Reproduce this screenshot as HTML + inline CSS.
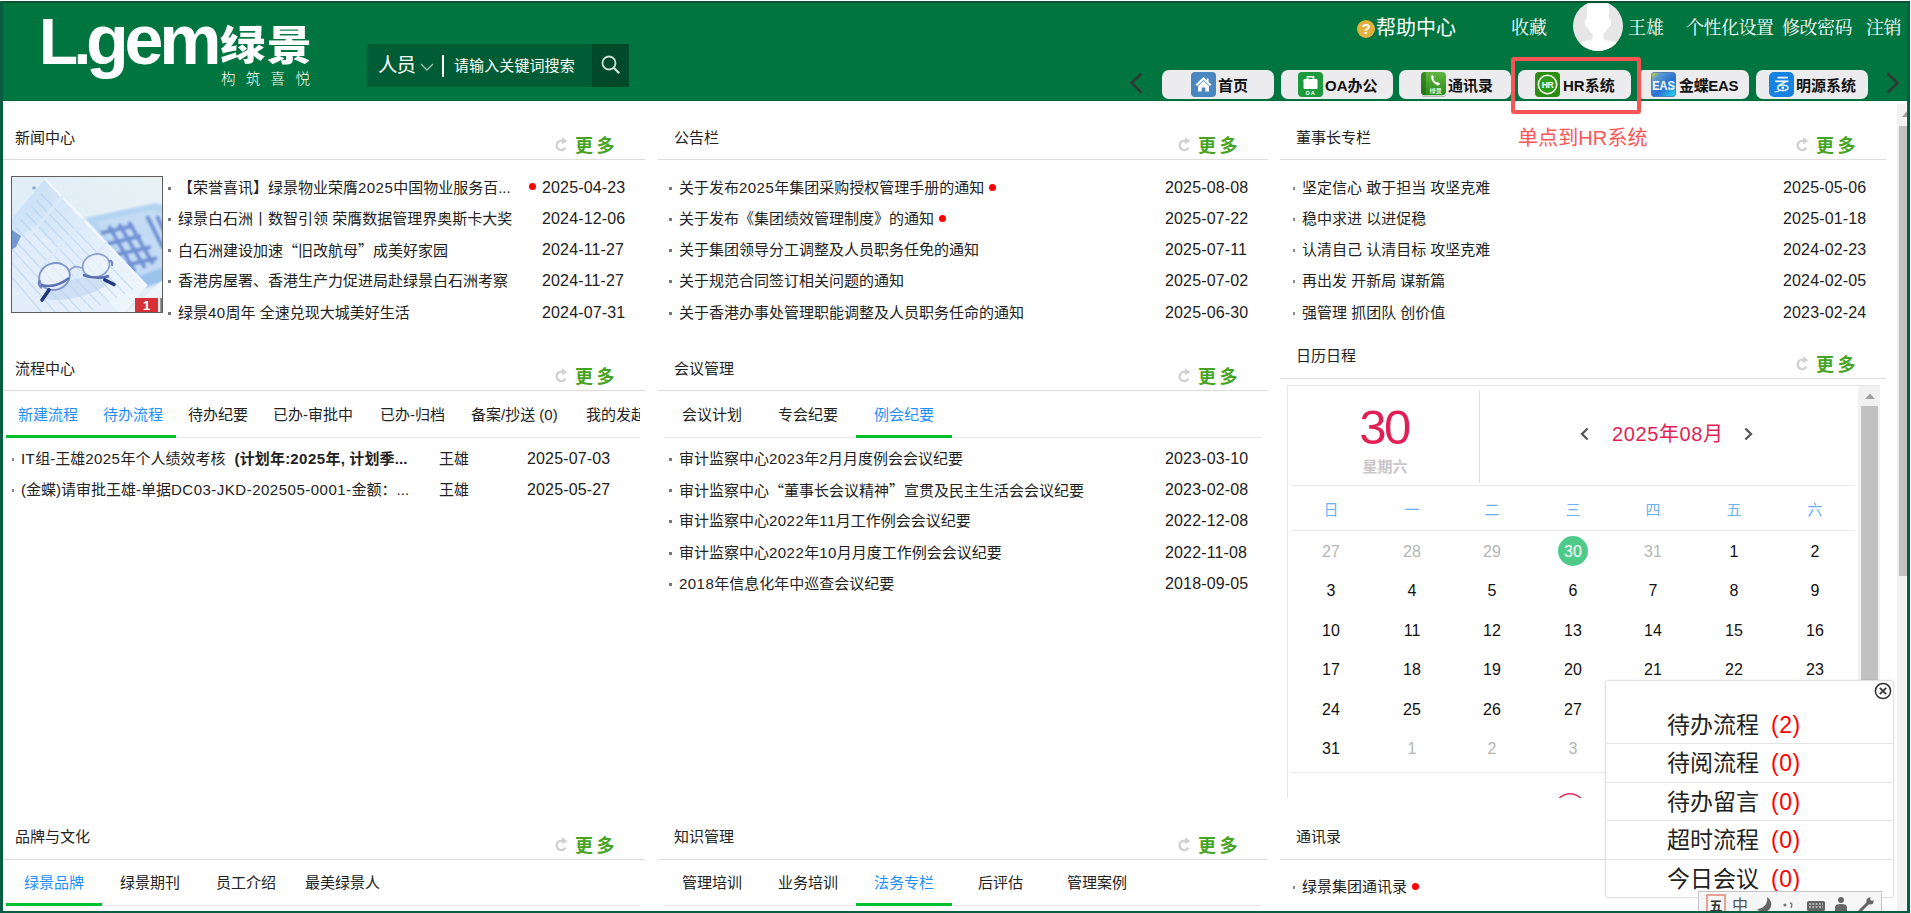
<!DOCTYPE html>
<html lang="zh-CN">
<head>
<meta charset="utf-8">
<title>绿景 OA 门户</title>
<style>
*{box-sizing:border-box;margin:0;padding:0}
html,body{width:1911px;height:913px;overflow:hidden;background:#fff}
body{position:relative;font-family:"Liberation Sans","Noto Sans CJK SC",sans-serif;font-size:15px;color:#222;line-height:1}
.abs{position:absolute}
.serif{font-family:"Liberation Serif","Noto Serif CJK SC",serif}
/* frame */
#hdr{left:0;top:1px;width:1910px;height:100px;background:#007540;border-bottom:1px solid #006a38}
#topdark{left:1px;top:1px;width:1909px;height:2px;background:#06512f}
#bl{left:0;top:2px;width:3px;height:911px;background:#075e40;z-index:60}
#br{left:1907px;top:2px;width:3px;height:911px;background:#075e40;z-index:60}
#bb{left:0;top:911px;width:1910px;height:2px;background:#075e40;z-index:60}
/* header */
.ut{color:#fff;font-size:18px;font-weight:400;top:18px;white-space:nowrap;line-height:20px}
.nav{top:70px;width:112px;height:29px;background:#ececef;border-radius:7px;font-weight:700;font-size:15px;color:#111;white-space:nowrap}
.nav svg{position:absolute;left:29px;top:2px;width:25px;height:25px}
.nav span{position:absolute;left:56px;top:8px;line-height:16px}
/* panels */
.pt{font-size:15px;color:#222;white-space:nowrap;line-height:16px}
.hl{height:2px;background:#e4e4e4}
.more{font-size:18px;font-weight:700;color:#46a422;letter-spacing:3.5px;white-space:nowrap;line-height:18px}
.rf{width:13px;height:15px}
.li{white-space:nowrap;line-height:18px;font-size:15px;color:#222}
.li i{position:absolute;left:-10px;top:8px;width:3px;height:3px;background:#777}
.li i.s{width:2px;height:3px;background:#8a8a8a;left:-9px}
.li b.dot{display:inline-block;width:7px;height:7px;border-radius:50%;background:#f00;margin-left:5px;vertical-align:2px}
.dt{white-space:nowrap;line-height:18px;font-size:16px;color:#222;letter-spacing:.15px}
u{text-decoration:none;letter-spacing:.45px}
q{quotes:none;font-family:'Noto Sans CJK SC',sans-serif}q:before,q:after{content:none}
.tab{white-space:nowrap;line-height:18px;font-size:15px;color:#222}
.tab.on{color:#1e8fff}
.ul{height:3px;background:#00c030}
.tl{height:1px;background:#e6e6e6}
</style>
</head>
<body>
<div class="abs" id="hdr"></div>
<div class="abs" id="topdark"></div>

<!-- logo -->
<div class="abs" style="left:39px;top:0px;font-size:64px;font-weight:700;color:#fff;letter-spacing:-4.5px;line-height:80px;white-space:nowrap">L.<span style="font-size:70px;letter-spacing:-4.2px;margin-left:-1px">gem</span></div>
<div class="abs" style="left:220px;top:14px;font-size:41px;font-weight:900;color:#fff;line-height:56px;white-space:nowrap;letter-spacing:1.5px;transform:scale(1.1,1);transform-origin:0 0;font-family:'Noto Sans CJK SC',sans-serif">绿景</div>
<div class="abs" style="left:221px;top:71px;font-size:14.5px;font-weight:300;color:#fff;line-height:16px;white-space:nowrap;letter-spacing:10.3px">构筑喜悦</div>

<!-- search -->
<div class="abs" style="left:367px;top:44px;width:262px;height:43px;background:#005c34"></div>
<div class="abs" style="left:592px;top:44px;width:37px;height:43px;background:#004a2a"></div>
<div class="abs" style="left:378px;top:54px;font-size:19.500px;color:#fff;line-height:22px;white-space:nowrap;letter-spacing:-1px">人员</div>
<svg class="abs" style="left:420px;top:62px" width="14" height="10" viewBox="0 0 14 10"><path d="M1 2 L7 8 L13 2" fill="none" stroke="#9fc4b0" stroke-width="1.3"/></svg>
<div class="abs" style="left:442px;top:55px;width:2px;height:22px;background:#fff"></div>
<div class="abs" style="left:454px;top:57px;font-size:15px;color:#fff;line-height:18px;white-space:nowrap;letter-spacing:.1px">请输入关键词搜索</div>
<svg class="abs" style="left:599px;top:53px" width="24" height="24" viewBox="0 0 24 24"><circle cx="10" cy="10" r="6.500" fill="none" stroke="#cfe0d6" stroke-width="1.8"/><path d="M15 15 L19.600 19.600" stroke="#cfe0d6" stroke-width="2.2" stroke-linecap="round"/></svg>

<!-- user bar -->
<div class="abs" style="left:1357px;top:20px;width:18px;height:18px;border-radius:50%;background:#e5b13d;color:#fff;font-size:15px;font-weight:700;text-align:center;line-height:18px">?</div>
<div class="abs ut" style="left:1376px;top:17px;font-size:20px;font-weight:400;line-height:22px">帮助中心</div>
<div class="abs ut serif" style="left:1511px">收藏</div>
<svg class="abs" style="left:1573px;top:.8px" width="50" height="50" viewBox="0 0 50 50"><defs><clipPath id="av"><circle cx="25" cy="25" r="25"/></clipPath><clipPath id="av2"><rect x="0" y="2.200" width="50" height="49"/></clipPath></defs><g clip-path="url(#av2)"><circle cx="25" cy="25" r="25" fill="#e6e6e6"/><g clip-path="url(#av)" fill="#fff"><path d="M14 0 H36 V17.500 q2.600 .6 2.200 4.600 q-.4 3.800 -3.600 5.200 q-1.800 4.600 -4.400 6 V37.200 q0 1.600 3 2.100 q8 1 13 3.700 V50 H3.800 V43 q5 -2.700 13 -3.700 q3 -.5 3 -2.100 V33.300 q-2.600 -1.400 -4.400 -6 q-3.200 -1.400 -3.600 -5.200 q-.4 -4 2.200 -4.600 Z"/></g></g></svg>
<div class="abs ut serif" style="left:1628px">王雄</div>
<div class="abs ut serif" style="left:1686px;letter-spacing:-.5px">个性化设置</div>
<div class="abs ut serif" style="left:1782px;letter-spacing:-.5px">修改密码</div>
<div class="abs ut serif" style="left:1866px;letter-spacing:-.5px">注销</div>

<!-- nav arrows -->
<svg class="abs" style="left:1128px;top:71px" width="16" height="24" viewBox="0 0 16 24"><path d="M13.5 2.5 L3.5 12 L13.5 21.5" fill="none" stroke="#303834" stroke-width="2.6"/></svg>
<svg class="abs" style="left:1885px;top:71px" width="16" height="24" viewBox="0 0 16 24"><path d="M2.5 2.5 L12.5 12 L2.5 21.5" fill="none" stroke="#303834" stroke-width="2.6"/></svg>


<div class="abs nav" style="left:1162px"><svg viewBox="0 0 25 25"><rect width="25" height="25" rx="4" fill="#4a86c0"/><path d="M12.5 5 L4.5 12.6 L6 14 L12.5 8 L19 14 L20.5 12.6 L17.6 9.9 V6.5 H15.8 V8.2 Z" fill="#fff"/><path d="M7 14 L12.5 9 L18 14 V19.5 H14.3 V15.5 H10.7 V19.5 H7 Z" fill="#fff"/></svg><span>首页</span></div>
<div class="abs nav" style="left:1281px"><svg viewBox="0 0 25 25" style="left:17px"><rect width="25" height="25" rx="4" fill="#1d9a3e"/><rect x="5.5" y="7" width="14" height="10" rx="1.3" fill="#fff"/><path d="M9.5 7 V4.8 H15.5 V7" fill="none" stroke="#fff" stroke-width="1.6"/><text x="12.5" y="22.6" font-family="Liberation Sans,sans-serif" font-size="5.5" font-weight="700" fill="#fff" text-anchor="middle" letter-spacing="1">OA</text></svg><span style="left:44px">OA办公</span></div>
<div class="abs nav" style="left:1399px"><svg viewBox="0 0 25 25" style="left:22px"><defs><linearGradient id="pg" x1="0" y1="0" x2="0" y2="1"><stop offset="0" stop-color="#62b641"/><stop offset="1" stop-color="#2b8919"/></linearGradient></defs><rect x=".6" y="3" width="24.400" height="22" rx="3.5" fill="#a9a9a9"/><rect x=".6" y="2.200" width="24.400" height="22" rx="3.5" fill="#f2f2f2"/><rect x="0" y="0" width="25" height="23.300" rx="4" fill="url(#pg)"/><path d="M0 4 a4 4 0 0 1 4 -4 h.8 v23.300 h-.8 a4 4 0 0 1 -4 -4 z" fill="#1c6510" opacity=".55"/><path d="M11.400 2.800 q-1.700 .5 -1.400 2.500 q.8 4.800 5.600 7.800 q1.800 .9 3 -.5 l.5 -.9 l-2.600 -2 l-1.100 .9 q-2.300 -1.300 -3.200 -4.100 l1.100 -1.100 z" fill="#fff"/><text x="14.800" y="20.800" font-family="Noto Sans CJK SC,sans-serif" font-size="6.200" font-weight="700" fill="#d9f1cf" text-anchor="middle">绿景</text></svg><span style="left:49px">通讯录</span></div>
<div class="abs nav" style="left:1518px;width:113px"><svg viewBox="0 0 25 25" style="left:17px"><rect width="25" height="25" rx="4" fill="#2e8c12"/><circle cx="12.5" cy="12.5" r="9.2" fill="#2e9c1a" stroke="#fff" stroke-width="1.5"/><text x="12.5" y="15.6" font-family="Liberation Sans,sans-serif" font-size="8.5" font-weight="700" fill="#fff" text-anchor="middle" letter-spacing="-.4">HR</text></svg><span style="left:45px">HR系统</span></div>
<div class="abs nav" style="left:1637px"><svg viewBox="0 0 25 25" style="left:14px"><defs><linearGradient id="eg" x1="0" y1="0" x2=".9" y2="1"><stop offset="0" stop-color="#e6de20"/><stop offset=".22" stop-color="#5a9ad0"/><stop offset=".6" stop-color="#2a6fd2"/><stop offset="1" stop-color="#22d0ee"/></linearGradient></defs><rect x=".4" y=".4" width="24.200" height="24.200" rx="3" fill="url(#eg)" stroke="#3566a8" stroke-width=".8"/><text x="1.200" y="17.600" font-family="Liberation Sans,sans-serif" font-size="13.500" fill="#fff" textLength="22.600" lengthAdjust="spacingAndGlyphs">EAS</text></svg><span style="left:42px;letter-spacing:-.35px">金蝶EAS</span></div>
<div class="abs nav" style="left:1756px"><svg viewBox="0 0 25 25" style="left:13px"><rect width="25" height="25" rx="5" fill="#1683e2"/><path d="M8.600 5.600 H18.800" stroke="#fff" stroke-width="1.700" fill="none"/><path d="M6.200 9.300 H19.400" stroke="#fff" stroke-width="1.700" fill="none"/><path d="M16.600 9.600 L9.600 13.600" stroke="#fff" stroke-width="1.500" fill="none"/><ellipse cx="13.800" cy="15.800" rx="5.200" ry="2.700" fill="none" stroke="#fff" stroke-width="1.400"/><circle cx="13.800" cy="15.800" r="1.300" fill="#fff"/><path d="M5.400 20 q3.600 -.3 6.200 -1.700" stroke="#fff" stroke-width="1" fill="none"/></svg><span style="left:40px">明源系统</span></div>

<!-- annotation -->
<div class="abs" style="left:1511px;top:56.5px;width:130px;height:57px;border:4px solid #f75555;border-radius:3px;z-index:20"></div>
<div class="abs" style="left:1518px;top:126px;font-size:20px;color:#f55;letter-spacing:.1px;line-height:24px;white-space:nowrap;z-index:20">单点到HR系统</div>


<!--P0-->
<div class="abs pt" style="left:15px;top:130px">新闻中心</div>
<svg class="abs" style="left:555px;top:136px" width="13" height="16" viewBox="0 0 13 16"><path d="M8.3 5.3 A4.6 4.6 0 1 0 10.3 11.6" fill="none" stroke="#d0d0d0" stroke-width="2.4"/><path d="M7.2 1.2 L12.4 5.2 L6.8 8.2 Z" fill="#d0d0d0"/></svg>
<div class="abs more" style="left:575px;top:137px">更多</div>
<div class="abs" style="left:3px;top:159px;width:642px;height:1px;background:#dcdcdc"></div>
<div class="abs pt" style="left:674px;top:130px">公告栏</div>
<svg class="abs" style="left:1178px;top:136px" width="13" height="16" viewBox="0 0 13 16"><path d="M8.3 5.3 A4.6 4.6 0 1 0 10.3 11.6" fill="none" stroke="#d0d0d0" stroke-width="2.4"/><path d="M7.2 1.2 L12.4 5.2 L6.8 8.2 Z" fill="#d0d0d0"/></svg>
<div class="abs more" style="left:1198px;top:137px">更多</div>
<div class="abs" style="left:658px;top:159px;width:610px;height:1px;background:#dcdcdc"></div>
<div class="abs pt" style="left:1296px;top:130px">董事长专栏</div>
<svg class="abs" style="left:1796px;top:136px" width="13" height="16" viewBox="0 0 13 16"><path d="M8.3 5.3 A4.6 4.6 0 1 0 10.3 11.6" fill="none" stroke="#d0d0d0" stroke-width="2.4"/><path d="M7.2 1.2 L12.4 5.2 L6.8 8.2 Z" fill="#d0d0d0"/></svg>
<div class="abs more" style="left:1816px;top:137px">更多</div>
<div class="abs" style="left:1280px;top:159px;width:606px;height:1px;background:#dcdcdc"></div>
<div class="abs li" style="left:178px;top:179px"><i></i>【荣誉喜讯】绿景物业荣膺<u>2025</u>中国物业服务百...</div>
<div class="abs" style="left:529px;top:183px;width:7px;height:7px;border-radius:50%;background:#f00"></div>
<div class="abs dt" style="left:542px;top:179px">2025-04-23</div>
<div class="abs li" style="left:178px;top:210px"><i></i>绿景白石洲丨数智引领 荣膺数据管理界奥斯卡大奖</div>
<div class="abs dt" style="left:542px;top:210px">2024-12-06</div>
<div class="abs li" style="left:178px;top:241px"><i></i>白石洲建设加速<q>“</q>旧改航母<q>”</q>成美好家园</div>
<div class="abs dt" style="left:542px;top:241px">2024-11-27</div>
<div class="abs li" style="left:178px;top:272px"><i></i>香港房屋署、香港生产力促进局赴绿景白石洲考察</div>
<div class="abs dt" style="left:542px;top:272px">2024-11-27</div>
<div class="abs li" style="left:178px;top:304px"><i></i>绿景<u>40</u>周年 全速兑现大城美好生活</div>
<div class="abs dt" style="left:542px;top:304px">2024-07-31</div>
<div class="abs li" style="left:679px;top:179px"><i></i>关于发布<u>2025</u>年集团采购授权管理手册的通知<b class="dot"></b></div>
<div class="abs dt" style="left:1165px;top:179px">2025-08-08</div>
<div class="abs li" style="left:679px;top:210px"><i></i>关于发布《集团绩效管理制度》的通知<b class="dot"></b></div>
<div class="abs dt" style="left:1165px;top:210px">2025-07-22</div>
<div class="abs li" style="left:679px;top:241px"><i></i>关于集团领导分工调整及人员职务任免的通知</div>
<div class="abs dt" style="left:1165px;top:241px">2025-07-11</div>
<div class="abs li" style="left:679px;top:272px"><i></i>关于规范合同签订相关问题的通知</div>
<div class="abs dt" style="left:1165px;top:272px">2025-07-02</div>
<div class="abs li" style="left:679px;top:304px"><i></i>关于香港办事处管理职能调整及人员职务任命的通知</div>
<div class="abs dt" style="left:1165px;top:304px">2025-06-30</div>
<div class="abs li" style="left:1302px;top:179px"><i class="s"></i>坚定信心 敢于担当 攻坚克难</div>
<div class="abs dt" style="left:1783px;top:179px">2025-05-06</div>
<div class="abs li" style="left:1302px;top:210px"><i class="s"></i>稳中求进 以进促稳</div>
<div class="abs dt" style="left:1783px;top:210px">2025-01-18</div>
<div class="abs li" style="left:1302px;top:241px"><i class="s"></i>认清自己 认清目标 攻坚克难</div>
<div class="abs dt" style="left:1783px;top:241px">2024-02-23</div>
<div class="abs li" style="left:1302px;top:272px"><i class="s"></i>再出发 开新局 谋新篇</div>
<div class="abs dt" style="left:1783px;top:272px">2024-02-05</div>
<div class="abs li" style="left:1302px;top:304px"><i class="s"></i>强管理 抓团队 创价值</div>
<div class="abs dt" style="left:1783px;top:304px">2023-02-24</div>
<div class="abs pt" style="left:15px;top:361px">流程中心</div>
<svg class="abs" style="left:555px;top:367px" width="13" height="16" viewBox="0 0 13 16"><path d="M8.3 5.3 A4.6 4.6 0 1 0 10.3 11.6" fill="none" stroke="#d0d0d0" stroke-width="2.4"/><path d="M7.2 1.2 L12.4 5.2 L6.8 8.2 Z" fill="#d0d0d0"/></svg>
<div class="abs more" style="left:575px;top:368px">更多</div>
<div class="abs" style="left:3px;top:390px;width:642px;height:1px;background:#dcdcdc"></div>
<div class="abs pt" style="left:674px;top:361px">会议管理</div>
<svg class="abs" style="left:1178px;top:367px" width="13" height="16" viewBox="0 0 13 16"><path d="M8.3 5.3 A4.6 4.6 0 1 0 10.3 11.6" fill="none" stroke="#d0d0d0" stroke-width="2.4"/><path d="M7.2 1.2 L12.4 5.2 L6.8 8.2 Z" fill="#d0d0d0"/></svg>
<div class="abs more" style="left:1198px;top:368px">更多</div>
<div class="abs" style="left:658px;top:390px;width:610px;height:1px;background:#dcdcdc"></div>
<div class="abs pt" style="left:1296px;top:348px">日历日程</div>
<svg class="abs" style="left:1796px;top:355px" width="13" height="16" viewBox="0 0 13 16"><path d="M8.3 5.3 A4.6 4.6 0 1 0 10.3 11.6" fill="none" stroke="#d0d0d0" stroke-width="2.4"/><path d="M7.2 1.2 L12.4 5.2 L6.8 8.2 Z" fill="#d0d0d0"/></svg>
<div class="abs more" style="left:1816px;top:356px">更多</div>
<div class="abs" style="left:1280px;top:378px;width:606px;height:1px;background:#dcdcdc"></div>
<div class="abs" style="left:3px;top:395px;width:637px;height:50px;overflow:hidden">
<div class="abs tab" style="left:583px;top:11px">我的发起</div></div>
<div class="abs tl" style="left:6px;top:437px;width:634px"></div>
<div class="abs tab on" style="left:18px;top:406px">新建流程</div>
<div class="abs tab on" style="left:103px;top:406px">待办流程</div>
<div class="abs tab" style="left:188px;top:406px">待办纪要</div>
<div class="abs tab" style="left:273px;top:406px">已办-审批中</div>
<div class="abs tab" style="left:380px;top:406px">已办-归档</div>
<div class="abs tab" style="left:471px;top:406px">备案/抄送 (0)</div>
<div class="abs ul" style="left:6px;top:435px;width:170px"></div>
<div class="abs li" style="left:21px;top:450px"><i class="s"></i><u>IT</u>组-王雄<u>2025</u>年个人绩效考核 <b style="font-weight:700;margin-left:5px;letter-spacing:.15px">(计划年:<u>2025</u>年, 计划季...</b></div>
<div class="abs li" style="left:21px;top:481px"><i class="s"></i>(金蝶)请审批王雄-单据<u style="letter-spacing:.5px">DC03-JKD-202505-0001-</u>金额：...</div>
<div class="abs li" style="left:439px;top:450px">王雄</div>
<div class="abs dt" style="left:527px;top:450px">2025-07-03</div>
<div class="abs li" style="left:439px;top:481px">王雄</div>
<div class="abs dt" style="left:527px;top:481px">2025-05-27</div>
<div class="abs tl" style="left:664px;top:437px;width:598px"></div>
<div class="abs tab" style="left:682px;top:406px">会议计划</div>
<div class="abs tab" style="left:778px;top:406px">专会纪要</div>
<div class="abs tab on" style="left:874px;top:406px">例会纪要</div>
<div class="abs ul" style="left:856px;top:435px;width:96px"></div>
<div class="abs li" style="left:679px;top:450px"><i></i>审计监察中心<u>2023</u>年<u>2</u>月月度例会会议纪要</div>
<div class="abs dt" style="left:1165px;top:450px">2023-03-10</div>
<div class="abs li" style="left:679px;top:481px"><i></i>审计监察中心<q>“</q>董事长会议精神<q>”</q>宣贯及民主生活会会议纪要</div>
<div class="abs dt" style="left:1165px;top:481px">2023-02-08</div>
<div class="abs li" style="left:679px;top:512px"><i></i>审计监察中心<u>2022</u>年<u>11</u>月工作例会会议纪要</div>
<div class="abs dt" style="left:1165px;top:512px">2022-12-08</div>
<div class="abs li" style="left:679px;top:544px"><i></i>审计监察中心<u>2022</u>年<u>10</u>月月度工作例会会议纪要</div>
<div class="abs dt" style="left:1165px;top:544px">2022-11-08</div>
<div class="abs li" style="left:679px;top:575px"><i></i><u>2018</u>年信息化年中巡查会议纪要</div>
<div class="abs dt" style="left:1165px;top:575px">2018-09-05</div>
<div class="abs pt" style="left:15px;top:829px">品牌与文化</div>
<svg class="abs" style="left:555px;top:836px" width="13" height="16" viewBox="0 0 13 16"><path d="M8.3 5.3 A4.6 4.6 0 1 0 10.3 11.6" fill="none" stroke="#d0d0d0" stroke-width="2.4"/><path d="M7.2 1.2 L12.4 5.2 L6.8 8.2 Z" fill="#d0d0d0"/></svg>
<div class="abs more" style="left:575px;top:837px">更多</div>
<div class="abs" style="left:3px;top:859px;width:642px;height:1px;background:#dcdcdc"></div>
<div class="abs pt" style="left:674px;top:829px">知识管理</div>
<svg class="abs" style="left:1178px;top:836px" width="13" height="16" viewBox="0 0 13 16"><path d="M8.3 5.3 A4.6 4.6 0 1 0 10.3 11.6" fill="none" stroke="#d0d0d0" stroke-width="2.4"/><path d="M7.2 1.2 L12.4 5.2 L6.8 8.2 Z" fill="#d0d0d0"/></svg>
<div class="abs more" style="left:1198px;top:837px">更多</div>
<div class="abs" style="left:658px;top:859px;width:610px;height:1px;background:#dcdcdc"></div>
<div class="abs pt" style="left:1296px;top:829px">通讯录</div>
<div class="abs" style="left:1280px;top:859px;width:606px;height:1px;background:#dcdcdc"></div>
<div class="abs tl" style="left:6px;top:905px;width:634px"></div>
<div class="abs tab on" style="left:24px;top:874px">绿景品牌</div>
<div class="abs tab" style="left:120px;top:874px">绿景期刊</div>
<div class="abs tab" style="left:216px;top:874px">员工介绍</div>
<div class="abs tab" style="left:305px;top:874px">最美绿景人</div>
<div class="abs ul" style="left:6px;top:903px;width:96px"></div>
<div class="abs tl" style="left:664px;top:905px;width:598px"></div>
<div class="abs tab" style="left:682px;top:874px">管理培训</div>
<div class="abs tab" style="left:778px;top:874px">业务培训</div>
<div class="abs tab on" style="left:874px;top:874px">法务专栏</div>
<div class="abs tab" style="left:978px;top:874px">后评估</div>
<div class="abs tab" style="left:1067px;top:874px">管理案例</div>
<div class="abs ul" style="left:856px;top:903px;width:96px"></div>
<div class="abs li" style="left:1302px;top:878px"><i class="s"></i>绿景集团通讯录<b class="dot"></b></div>
<!--P1-->
<!--C0-->
<svg class="abs" style="left:11px;top:176px" width="152" height="137" viewBox="0 0 152 137">
<defs><linearGradient id="nbg" x1="0" y1="1" x2="1" y2="0"><stop offset="0" stop-color="#d4e8f8"/><stop offset=".55" stop-color="#e2eff7"/><stop offset="1" stop-color="#e9f1f3"/></linearGradient>
<linearGradient id="npap" x1="0" y1="0" x2="1" y2="1"><stop offset="0" stop-color="#c2dcf4"/><stop offset=".45" stop-color="#dfedfa"/><stop offset="1" stop-color="#f2f8fd"/></linearGradient>
<filter id="b1" x="-10%" y="-10%" width="120%" height="120%"><feGaussianBlur stdDeviation=".9"/></filter>
<filter id="b2" x="-10%" y="-10%" width="120%" height="120%"><feGaussianBlur stdDeviation=".7"/></filter>
<filter id="b3" x="-10%" y="-10%" width="120%" height="120%"><feGaussianBlur stdDeviation=".35"/></filter>
<clipPath id="ncl"><rect x="1" y="1" width="150" height="135"/></clipPath></defs>
<rect x="0" y="0" width="152" height="137" fill="url(#nbg)"/>
<g clip-path="url(#ncl)">
<g filter="url(#b1)">
<path d="M74 42 L145 27 L156 30 V100 L134 110 Z" fill="#b2d4f1"/>
<path d="M84 46 L141 34 L156 38 V92 L130 100 Z" fill="#c3dcf4"/>
<path d="M128 100 L156 90 V104 L134 112 Z" fill="#9cc3ec"/>
<g stroke="#6a8bd2" stroke-width="4" fill="none" opacity=".9"><path d="M90 57 L122 50"/><path d="M96 68 L130 60"/><path d="M104 79 L140 71"/><path d="M112 90 L146 82"/><path d="M98 50 L124 96"/><path d="M108 48 L134 92"/><path d="M118 46 L142 88"/><path d="M136 40 L152 72"/><path d="M146 40 L156 62"/></g>
</g>
<g filter="url(#b2)">
<path d="M-4 48 L34 3 L136 110 L110 140 H-4 Z" fill="url(#npap)"/>
<path d="M-4 72 L24 50 L112 140 H-4 Z" fill="#e3eefa" opacity=".75"/>
<path d="M34 3 L136 110" stroke="#f4f9fe" stroke-width="2"/>
<g stroke="#9fc2ea" stroke-width="1.2" opacity=".42"><path d="M30 18 L122 114"/><path d="M25 24 L114 118"/><path d="M20 30 L106 122"/><path d="M15 37 L98 126"/><path d="M10 44 L90 130"/><path d="M5 52 L82 134"/><path d="M0 60 L72 138"/><path d="M0 72 L60 138"/><path d="M0 86 L46 138"/><path d="M0 100 L32 138"/></g>
<g stroke="#dcebf9" stroke-width="3" opacity=".9"><path d="M52 20 L20 58"/><path d="M74 42 L30 92"/><path d="M96 66 L44 124"/></g>
<path d="M-2 52 L10 60 L5 71 L-2 75 Z" fill="#5f86c6" opacity=".8"/>
<circle cx="23" cy="12" r="1.8" fill="#86abd9"/>
<path d="M112 140 L156 100 V140 Z" fill="#edf4fb"/>
<ellipse cx="66" cy="112" rx="34" ry="9" transform="rotate(-14 66 112)" fill="#b9d3ef" opacity=".55"/>
</g>
<g filter="url(#b3)">
<ellipse cx="43.500" cy="100.5" rx="15.5" ry="13.2" transform="rotate(-18 43.5 100.5)" fill="#eef5fc" fill-opacity=".65" stroke="#7f93c8" stroke-width="1.8"/>
<ellipse cx="85" cy="89.500" rx="13.6" ry="11.3" transform="rotate(-18 85 89.5)" fill="#eef5fc" fill-opacity=".65" stroke="#8a9fd0" stroke-width="1.7"/>
<path d="M58 95 q5 -7 13 -3" fill="none" stroke="#8a9fd0" stroke-width="1.7"/>
<path d="M29 104 q-3 4 2 8" fill="none" stroke="#6f86c0" stroke-width="2.4"/>
<path d="M98 85 q4 -1 3 5" fill="none" stroke="#6f86c0" stroke-width="2.2"/>
<path d="M30 109 Q44 113 58 102" fill="none" stroke="#5a6fb2" stroke-width="2.4"/>
<path d="M72 99 Q86 104 98 100" fill="none" stroke="#5a6fb2" stroke-width="2.4"/>
<path d="M38 114 L31 124" stroke="#22387a" stroke-width="3.6" stroke-linecap="round"/>
<path d="M94 104 L103 108.500" stroke="#22387a" stroke-width="3.6" stroke-linecap="round"/>
</g>
</g>
<rect x="124" y="122" width="23" height="14" fill="#d63038"/><rect x="147" y="122" width="3" height="14" fill="#ececec"/><rect x="149.500" y="122" width="1.2" height="14" fill="#444"/>
<text x="135.500" y="134" font-family="Liberation Sans,sans-serif" font-size="13" font-weight="700" fill="#fff" text-anchor="middle">1</text>
<rect x=".5" y=".5" width="151" height="136" fill="none" stroke="#5e5e5e"/>
</svg>
<div class="abs" style="left:1287px;top:385px;width:593px;height:413px;border:1px solid #e6e6e6;border-bottom:none"></div>
<div class="abs" style="left:1355px;top:401px;width:60px;text-align:center;font-size:49px;color:#e21f55;line-height:52px;letter-spacing:-2.5px;white-space:nowrap;text-indent:-2px">30</div>
<div class="abs" style="left:1339px;top:458px;width:92px;text-align:center;font-size:15px;font-weight:700;color:#c9c5c9;line-height:18px;white-space:nowrap">星期六</div>
<div class="abs" style="left:1479px;top:390px;width:1px;height:93px;background:#dedede"></div>
<div class="abs" style="left:1292px;top:485px;width:563px;height:1px;background:#e8e8e8"></div>
<div class="abs" style="left:1612px;top:422px;font-size:20px;color:#e21f55;line-height:24px;white-space:nowrap;letter-spacing:.6px">2025年08月</div>
<svg class="abs" style="left:1578px;top:426px" width="12" height="16" viewBox="0 0 12 16"><path d="M9.6 2.5 L4 8 L9.6 13.5" fill="none" stroke="#555" stroke-width="2.3"/></svg>
<svg class="abs" style="left:1743px;top:426px" width="12" height="16" viewBox="0 0 12 16"><path d="M2.4 2.5 L8 8 L2.4 13.5" fill="none" stroke="#555" stroke-width="2.3"/></svg>
<div class="abs" style="left:1311px;top:501px;width:40px;text-align:center;font-size:15px;color:#6cb2f2;line-height:18px">日</div>
<div class="abs" style="left:1392px;top:501px;width:40px;text-align:center;font-size:15px;color:#6cb2f2;line-height:18px">一</div>
<div class="abs" style="left:1472px;top:501px;width:40px;text-align:center;font-size:15px;color:#6cb2f2;line-height:18px">二</div>
<div class="abs" style="left:1553px;top:501px;width:40px;text-align:center;font-size:15px;color:#6cb2f2;line-height:18px">三</div>
<div class="abs" style="left:1633px;top:501px;width:40px;text-align:center;font-size:15px;color:#6cb2f2;line-height:18px">四</div>
<div class="abs" style="left:1714px;top:501px;width:40px;text-align:center;font-size:15px;color:#6cb2f2;line-height:18px">五</div>
<div class="abs" style="left:1795px;top:501px;width:40px;text-align:center;font-size:15px;color:#6cb2f2;line-height:18px">六</div>
<div class="abs" style="left:1292px;top:530px;width:563px;height:1px;background:#e8e8e8"></div>
<div class="abs" style="left:1558px;top:536px;width:30px;height:30px;border-radius:50%;background:#4ecb8b"></div>
<div class="abs" style="left:1311px;top:543px;width:40px;text-align:center;font-size:16px;color:#b5b5b5;line-height:18px;letter-spacing:0">27</div>
<div class="abs" style="left:1392px;top:543px;width:40px;text-align:center;font-size:16px;color:#b5b5b5;line-height:18px;letter-spacing:0">28</div>
<div class="abs" style="left:1472px;top:543px;width:40px;text-align:center;font-size:16px;color:#b5b5b5;line-height:18px;letter-spacing:0">29</div>
<div class="abs" style="left:1553px;top:543px;width:40px;text-align:center;font-size:16px;color:#fff;line-height:18px;letter-spacing:0">30</div>
<div class="abs" style="left:1633px;top:543px;width:40px;text-align:center;font-size:16px;color:#b5b5b5;line-height:18px;letter-spacing:0">31</div>
<div class="abs" style="left:1714px;top:543px;width:40px;text-align:center;font-size:16px;color:#111;line-height:18px;letter-spacing:0">1</div>
<div class="abs" style="left:1795px;top:543px;width:40px;text-align:center;font-size:16px;color:#111;line-height:18px;letter-spacing:0">2</div>
<div class="abs" style="left:1311px;top:582px;width:40px;text-align:center;font-size:16px;color:#111;line-height:18px;letter-spacing:0">3</div>
<div class="abs" style="left:1392px;top:582px;width:40px;text-align:center;font-size:16px;color:#111;line-height:18px;letter-spacing:0">4</div>
<div class="abs" style="left:1472px;top:582px;width:40px;text-align:center;font-size:16px;color:#111;line-height:18px;letter-spacing:0">5</div>
<div class="abs" style="left:1553px;top:582px;width:40px;text-align:center;font-size:16px;color:#111;line-height:18px;letter-spacing:0">6</div>
<div class="abs" style="left:1633px;top:582px;width:40px;text-align:center;font-size:16px;color:#111;line-height:18px;letter-spacing:0">7</div>
<div class="abs" style="left:1714px;top:582px;width:40px;text-align:center;font-size:16px;color:#111;line-height:18px;letter-spacing:0">8</div>
<div class="abs" style="left:1795px;top:582px;width:40px;text-align:center;font-size:16px;color:#111;line-height:18px;letter-spacing:0">9</div>
<div class="abs" style="left:1311px;top:622px;width:40px;text-align:center;font-size:16px;color:#111;line-height:18px;letter-spacing:0">10</div>
<div class="abs" style="left:1392px;top:622px;width:40px;text-align:center;font-size:16px;color:#111;line-height:18px;letter-spacing:0">11</div>
<div class="abs" style="left:1472px;top:622px;width:40px;text-align:center;font-size:16px;color:#111;line-height:18px;letter-spacing:0">12</div>
<div class="abs" style="left:1553px;top:622px;width:40px;text-align:center;font-size:16px;color:#111;line-height:18px;letter-spacing:0">13</div>
<div class="abs" style="left:1633px;top:622px;width:40px;text-align:center;font-size:16px;color:#111;line-height:18px;letter-spacing:0">14</div>
<div class="abs" style="left:1714px;top:622px;width:40px;text-align:center;font-size:16px;color:#111;line-height:18px;letter-spacing:0">15</div>
<div class="abs" style="left:1795px;top:622px;width:40px;text-align:center;font-size:16px;color:#111;line-height:18px;letter-spacing:0">16</div>
<div class="abs" style="left:1311px;top:661px;width:40px;text-align:center;font-size:16px;color:#111;line-height:18px;letter-spacing:0">17</div>
<div class="abs" style="left:1392px;top:661px;width:40px;text-align:center;font-size:16px;color:#111;line-height:18px;letter-spacing:0">18</div>
<div class="abs" style="left:1472px;top:661px;width:40px;text-align:center;font-size:16px;color:#111;line-height:18px;letter-spacing:0">19</div>
<div class="abs" style="left:1553px;top:661px;width:40px;text-align:center;font-size:16px;color:#111;line-height:18px;letter-spacing:0">20</div>
<div class="abs" style="left:1633px;top:661px;width:40px;text-align:center;font-size:16px;color:#111;line-height:18px;letter-spacing:0">21</div>
<div class="abs" style="left:1714px;top:661px;width:40px;text-align:center;font-size:16px;color:#111;line-height:18px;letter-spacing:0">22</div>
<div class="abs" style="left:1795px;top:661px;width:40px;text-align:center;font-size:16px;color:#111;line-height:18px;letter-spacing:0">23</div>
<div class="abs" style="left:1311px;top:701px;width:40px;text-align:center;font-size:16px;color:#111;line-height:18px;letter-spacing:0">24</div>
<div class="abs" style="left:1392px;top:701px;width:40px;text-align:center;font-size:16px;color:#111;line-height:18px;letter-spacing:0">25</div>
<div class="abs" style="left:1472px;top:701px;width:40px;text-align:center;font-size:16px;color:#111;line-height:18px;letter-spacing:0">26</div>
<div class="abs" style="left:1553px;top:701px;width:40px;text-align:center;font-size:16px;color:#111;line-height:18px;letter-spacing:0">27</div>
<div class="abs" style="left:1633px;top:701px;width:40px;text-align:center;font-size:16px;color:#111;line-height:18px;letter-spacing:0">28</div>
<div class="abs" style="left:1714px;top:701px;width:40px;text-align:center;font-size:16px;color:#111;line-height:18px;letter-spacing:0">29</div>
<div class="abs" style="left:1795px;top:701px;width:40px;text-align:center;font-size:16px;color:#111;line-height:18px;letter-spacing:0">30</div>
<div class="abs" style="left:1311px;top:740px;width:40px;text-align:center;font-size:16px;color:#111;line-height:18px;letter-spacing:0">31</div>
<div class="abs" style="left:1392px;top:740px;width:40px;text-align:center;font-size:16px;color:#b5b5b5;line-height:18px;letter-spacing:0">1</div>
<div class="abs" style="left:1472px;top:740px;width:40px;text-align:center;font-size:16px;color:#b5b5b5;line-height:18px;letter-spacing:0">2</div>
<div class="abs" style="left:1553px;top:740px;width:40px;text-align:center;font-size:16px;color:#b5b5b5;line-height:18px;letter-spacing:0">3</div>
<div class="abs" style="left:1633px;top:740px;width:40px;text-align:center;font-size:16px;color:#b5b5b5;line-height:18px;letter-spacing:0">4</div>
<div class="abs" style="left:1714px;top:740px;width:40px;text-align:center;font-size:16px;color:#b5b5b5;line-height:18px;letter-spacing:0">5</div>
<div class="abs" style="left:1795px;top:740px;width:40px;text-align:center;font-size:16px;color:#b5b5b5;line-height:18px;letter-spacing:0">6</div>
<div class="abs" style="left:1290px;top:772px;width:565px;height:1px;background:#ececec"></div>
<svg class="abs" style="left:1554px;top:792px" width="32" height="6" viewBox="0 0 32 6"><circle cx="16" cy="16.500" r="14.800" fill="none" stroke="#e0345f" stroke-width="1.600"/></svg>
<div class="abs" style="left:1858px;top:386px;width:22px;height:412px;background:#f1f1f1"></div>
<div class="abs" style="left:1861px;top:406px;width:17px;height:392px;background:#c1c1c1"></div>
<svg class="abs" style="left:1865px;top:393px" width="10" height="6" viewBox="0 0 10 6"><path d="M0 6 L5 0.5 L10 6 Z" fill="#a0a0a0"/></svg>
<div class="abs" style="left:1605px;top:680px;width:289px;height:218px;background:#fff;border:1px solid #e2e2e2;border-radius:3px;box-shadow:0 0 3px rgba(0,0,0,.08);z-index:30"></div>
<svg class="abs" style="left:1874px;top:682px;z-index:31" width="18" height="18" viewBox="0 0 18 18"><circle cx="9" cy="9" r="7.6" fill="#fff" stroke="#333" stroke-width="1.5"/><path d="M5.8 5.8 L12.2 12.2 M12.2 5.8 L5.8 12.2" stroke="#333" stroke-width="1.7"/></svg>
<div class="abs" style="left:1667px;top:711px;font-size:23px;color:#222;line-height:28px;white-space:nowrap;z-index:31">待办流程<span style="color:#f00;margin-left:12px;letter-spacing:.5px">(2)</span></div>
<div class="abs" style="left:1667px;top:749px;font-size:23px;color:#222;line-height:28px;white-space:nowrap;z-index:31">待阅流程<span style="color:#f00;margin-left:12px;letter-spacing:.5px">(0)</span></div>
<div class="abs" style="left:1667px;top:788px;font-size:23px;color:#222;line-height:28px;white-space:nowrap;z-index:31">待办留言<span style="color:#f00;margin-left:12px;letter-spacing:.5px">(0)</span></div>
<div class="abs" style="left:1667px;top:826px;font-size:23px;color:#222;line-height:28px;white-space:nowrap;z-index:31">超时流程<span style="color:#f00;margin-left:12px;letter-spacing:.5px">(0)</span></div>
<div class="abs" style="left:1667px;top:865px;font-size:23px;color:#222;line-height:28px;white-space:nowrap;z-index:31">今日会议<span style="color:#f00;margin-left:12px;letter-spacing:.5px">(0)</span></div>
<div class="abs" style="left:1606px;top:743px;width:287px;height:1px;background:#e4e4e4;z-index:31"></div>
<div class="abs" style="left:1606px;top:782px;width:287px;height:1px;background:#e4e4e4;z-index:31"></div>
<div class="abs" style="left:1606px;top:820px;width:287px;height:1px;background:#e4e4e4;z-index:31"></div>
<div class="abs" style="left:1606px;top:859px;width:287px;height:1px;background:#e4e4e4;z-index:31"></div>
<div class="abs" style="left:1698px;top:891px;width:184px;height:22px;background:#f6f6f6;border:1px solid #c4c4c4;border-bottom:none;z-index:40"></div>
<div class="abs" style="left:1706px;top:894px;width:20px;height:18px;border:2px solid #e8a090;border-bottom:none;z-index:41;font-size:13px;font-weight:700;color:#333;line-height:20px;text-align:center;overflow:hidden">五</div>
<div class="abs" style="left:1732px;top:896px;font-size:16px;color:#555;line-height:20px;z-index:41">中</div>
<svg class="abs" style="left:1757px;top:896px;z-index:41" width="120" height="16" viewBox="0 0 120 16"><path d="M10 1 A8 8 0 1 1 0 13 A10 10 0 0 0 10 1 Z" fill="#666"/><circle cx="28" cy="9" r="1.6" fill="#777"/><path d="M33 7 q3 0 1 5" stroke="#777" stroke-width="1.4" fill="none"/><rect x="50" y="5" width="18" height="10" rx="1.5" fill="#666"/><path d="M52 8 H66 M52 11 H66" stroke="#f6f6f6" stroke-width="1" stroke-dasharray="2 1.3"/><circle cx="84" cy="4" r="3" fill="#666"/><path d="M78 16 V11 q0 -3 6 -3 q6 0 6 3 V16 Z" fill="#666"/><path d="M103 15 L112 6" stroke="#666" stroke-width="3" stroke-linecap="round"/><circle cx="113" cy="5" r="3.6" fill="#666"/><circle cx="115" cy="3" r="1.8" fill="#f6f6f6"/></svg>
<div class="abs" style="left:1897px;top:104px;width:9px;height:807px;background:#f1f1f1"></div>
<div class="abs" style="left:1899px;top:126px;width:8px;height:450px;background:#c1c1c1"></div>
<svg class="abs" style="left:1902px;top:111px" width="5" height="6" viewBox="0 0 5 6"><path d="M0 6 L5 0 V6 Z" fill="#a3a3a3"/></svg>
<!--C1-->

<div class="abs" id="bl"></div>
<div class="abs" id="br"></div>
<div class="abs" id="bb"></div>
</body>
</html>
